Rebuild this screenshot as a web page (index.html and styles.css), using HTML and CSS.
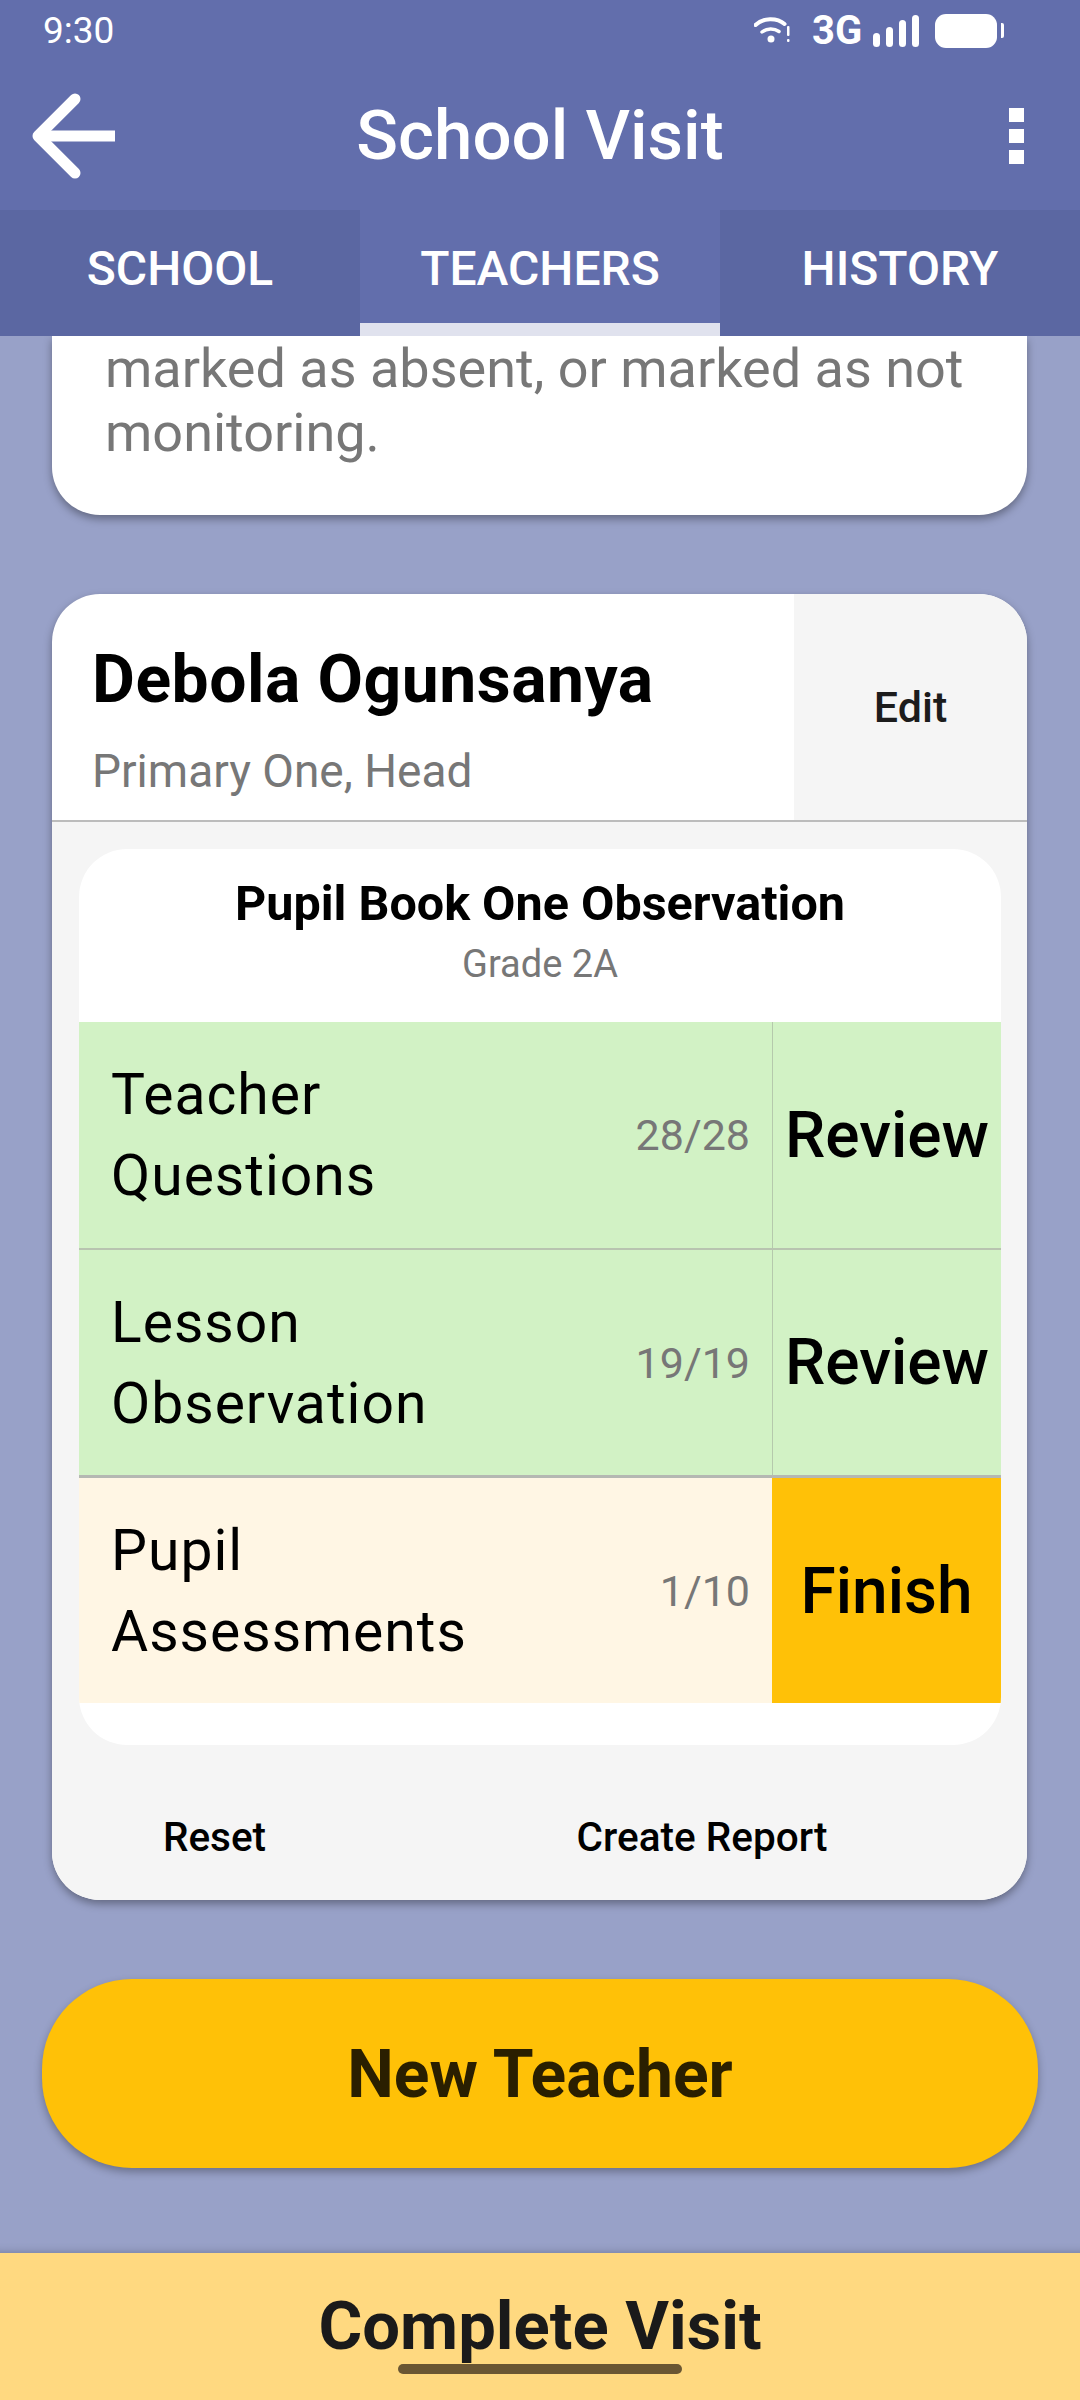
FILE: index.html
```html
<!DOCTYPE html>
<html lang="en">
<head>
    <meta charset="UTF-8">
    <meta name="viewport" content="width=device-width, initial-scale=1.0">
    <title>School Visit</title>
    <link rel="stylesheet" href="styles.css">
</head>
<body>

<div class="status-bar">
    <span class="clock">9:30</span>
    <div class="status-icons">
        <svg class="wifi" width="37" height="26" viewBox="0 0 37 26">
            <path d="M1.5 8 C9 0.5 23 0.5 30.5 7" fill="none" stroke="#fff" stroke-width="4" stroke-linecap="round"/>
            <path d="M8 15 C13 11 20 11 25 14.5" fill="none" stroke="#fff" stroke-width="3.5" stroke-linecap="round"/>
            <circle cx="17" cy="22" r="3.5" fill="#fff"/>
            <rect x="33" y="9" width="2.5" height="10" rx="1" fill="#fff"/>
            <rect x="33" y="22" width="2.5" height="3" rx="1" fill="#fff"/>
        </svg>
        <span class="network">3G</span>
        <div class="signal">
            <i class="bar-1"></i><i class="bar-2"></i><i class="bar-3"></i><i class="bar-4"></i>
        </div>
        <div class="battery"></div>
        <div class="battery-nub"></div>
    </div>
</div>

<header class="app-bar">
    <svg class="back" width="96" height="88" viewBox="0 0 96 88">
        <path d="M51 7 L14 44 L51 81" fill="none" stroke="#fff" stroke-width="11" stroke-linejoin="round" stroke-linecap="round"/>
        <path d="M14 44 H91" fill="none" stroke="#fff" stroke-width="11"/>
    </svg>
    <h1>School Visit</h1>
    <div class="kebab"><i></i><i></i><i></i></div>
</header>

<nav class="tabs">
    <div class="tab">SCHOOL</div>
    <div class="tab active">TEACHERS</div>
    <div class="tab">HISTORY</div>
</nav>

<main class="scroll">
    <section class="card note">
        marked as absent, or marked as not monitoring.
    </section>

    <section class="card teacher">
        <div class="teacher-head">
            <div class="teacher-info">
                <div class="teacher-name">Debola Ogunsanya</div>
                <div class="teacher-class">Primary One, Head</div>
            </div>
            <div class="edit">Edit</div>
        </div>

        <div class="teacher-body">
            <div class="observation">
                <div class="observation-head">
                    <div class="observation-title">Pupil Book One Observation</div>
                    <div class="observation-grade">Grade 2A</div>
                </div>

                <div class="row done">
                    <div class="row-label">Teacher<br>Questions</div>
                    <div class="row-score">28/28</div>
                    <div class="row-action">Review</div>
                </div>
                <div class="row done row-thick">
                    <div class="row-label">Lesson<br>Observation</div>
                    <div class="row-score">19/19</div>
                    <div class="row-action">Review</div>
                </div>
                <div class="row todo">
                    <div class="row-label">Pupil<br>Assessments</div>
                    <div class="row-score">1/10</div>
                    <div class="row-action">Finish</div>
                </div>
            </div>

            <div class="teacher-actions">
                <div>Reset</div>
                <div>Create Report</div>
            </div>
        </div>
    </section>

    <div class="new-teacher">New Teacher</div>
</main>

<footer class="complete">Complete Visit</footer>
<div class="gesture-handle"></div>

</body>
</html>
```

FILE: styles.css
```css
* {
    box-sizing: border-box;
}
html, body {
    height: 100%;
}
body {
    font-family: 'Roboto', sans-serif;
    margin: 0;
    width: 1080px;
    height: 2400px;
    overflow: hidden;
    display: flex;
    flex-direction: column;
    position: relative;
    background-color: #98a1c8;
    color: #000000;
}

/* Status bar */
.status-bar {
    height: 60px;
    flex: none;
    background-color: #626eac;
    color: #ffffff;
    display: flex;
    justify-content: space-between;
    padding: 14px 76px 0 43px;
}
.clock {
    font-size: 37px;
    line-height: 34px;
}
.status-icons {
    display: flex;
    align-items: flex-start;
}
.wifi {
    margin-top: 3px;
}
.network {
    font-size: 40px;
    line-height: 34px;
    font-weight: 700;
    margin-left: 21px;
    width: 61px;
}
.signal {
    display: flex;
    align-items: flex-end;
    gap: 6px;
    height: 32px;
    margin-top: 1px;
}
.signal i {
    display: block;
    width: 7px;
    border-radius: 4px;
    background-color: #ffffff;
}
.bar-1 { height: 14px; }
.bar-2 { height: 20px; }
.bar-3 { height: 27px; }
.bar-4 { height: 32px; }
.battery {
    width: 62px;
    height: 34px;
    margin-left: 16px;
    border-radius: 11px;
    background-color: #ffffff;
}
.battery-nub {
    width: 3px;
    height: 15px;
    margin: 9px 0 0 4px;
    border-radius: 0 2px 2px 0;
    background-color: #ffffff;
}

/* App bar */
.app-bar {
    height: 150px;
    flex: none;
    background-color: #626eac;
    color: #ffffff;
    display: grid;
    grid-template-columns: 1fr auto 1fr;
    align-items: center;
    padding: 0 56px;
}
.app-bar h1 {
    font-size: 69px;
    font-weight: 500;
    margin: 0;
}
.back {
    margin: 2px 0 0 -32px;
}
.kebab {
    display: flex;
    flex-direction: column;
    gap: 7px;
    margin-top: 2px;
    width: 15px;
    justify-self: end;
}
.kebab i {
    display: block;
    height: 14px;
    background-color: #ffffff;
}

/* Tabs */
.tabs {
    height: 126px;
    flex: none;
    display: grid;
    grid-template-columns: repeat(3, 1fr);
    grid-template-rows: 126px;
    position: relative;
    z-index: 2;
}
.tab {
    background-color: #5b67a2;
    color: #ffffff;
    font-size: 48px;
    font-weight: 500;
    text-align: center;
    line-height: 118px;
}
.tab.active {
    background-color: #626eac;
    border-bottom: 13px solid #e0e2ee;
}

/* Scrolling content */
.scroll {
    flex: 1;
    min-height: 0;
    overflow: hidden;
    box-shadow: inset 0 -10px 10px -10px rgba(0, 0, 0, 0.25);
}
.card {
    margin: 0 53px 0 52px;
    background-color: #ffffff;
    box-shadow: 0 4px 8px rgba(0, 0, 0, 0.35);
}
.note {
    padding: 1px 50px 50px 53px;
    height: 179px;
    font-size: 54px;
    line-height: 64px;
    color: #777777;
    border-radius: 0 0 48px 48px;
}
.teacher {
    margin-top: 79px;
    border-radius: 48px;
    overflow: hidden;
}
.teacher-head {
    display: flex;
    height: 228px;
    border-bottom: 2px solid #bcbcbc;
}
.teacher-info {
    flex: 1;
    padding: 49px 0 0 40px;
}
.teacher-name {
    font-size: 66px;
    line-height: 74px;
    font-weight: 700;
    letter-spacing: 0.5px;
}
.teacher-class {
    font-size: 46px;
    line-height: 50px;
    margin-top: 29px;
    color: #777777;
}
.edit {
    width: 233px;
    background-color: #f5f5f5;
    color: #1c1c1c;
    font-size: 43px;
    font-weight: 500;
    text-align: center;
    padding-top: 88px;
}
.teacher-body {
    background-color: #f5f5f5;
    padding-top: 27px;
}
.observation {
    margin: 0 26px 0 27px;
    background-color: #ffffff;
    border-radius: 48px;
    padding-bottom: 42px;
    overflow: hidden;
}
.observation-head {
    height: 173px;
    text-align: center;
    padding-top: 30px;
}
.observation-title {
    font-size: 48.5px;
    line-height: 50px;
    font-weight: 700;
}
.observation-grade {
    font-size: 38px;
    line-height: 40px;
    margin-top: 15px;
    color: #777777;
}
.row {
    display: flex;
    align-items: center;
    height: 228px;
    border-bottom: 2px solid #b8c4b0;
}
.row-thick {
    border-bottom: 3px solid #b5b8b2;
}
.row:last-child {
    border-bottom: none;
    height: 225px;
}
.row-label {
    flex: 1;
    padding-left: 32px;
    font-size: 57px;
    line-height: 81px;
    letter-spacing: 1px;
}
.row-score {
    width: 180px;
    padding-right: 22px;
    text-align: right;
    font-size: 43px;
    color: #777777;
    white-space: nowrap;
}
.row-action {
    width: 229px;
    align-self: stretch;
    display: flex;
    align-items: center;
    justify-content: center;
    font-size: 64px;
    font-weight: 500;
}
.done {
    background-color: #d2f2c5;
}
.done .row-action {
    border-left: 1px solid #b5c9ac;
}
.todo {
    background-color: #fff6e4;
}
.todo .row-action {
    background-color: #ffc107;
    padding-top: 2px;
}
.teacher-actions {
    display: grid;
    grid-template-columns: 1fr 2fr;
    height: 155px;
    padding-top: 67px;
    text-align: center;
    font-size: 40.5px;
    line-height: 50px;
    font-weight: 500;
}
.new-teacher {
    margin: 79px 42px 0 42px;
    height: 189px;
    border-radius: 90px;
    background-color: #ffc107;
    color: #2a1f00;
    font-size: 66px;
    font-weight: 700;
    line-height: 191px;
    text-align: center;
    box-shadow: 0 4px 8px rgba(0, 0, 0, 0.3);
}

/* Bottom bar */
.complete {
    height: 147px;
    flex: none;
    background-color: #ffd980;
    color: #1a1a1a;
    font-size: 67px;
    font-weight: 700;
    text-align: center;
    padding-top: 35px;
    line-height: 76px;
}
.gesture-handle {
    position: absolute;
    left: 398px;
    top: 2364px;
    width: 284px;
    height: 10px;
    border-radius: 5px;
    background-color: #6a5633;
}
```
